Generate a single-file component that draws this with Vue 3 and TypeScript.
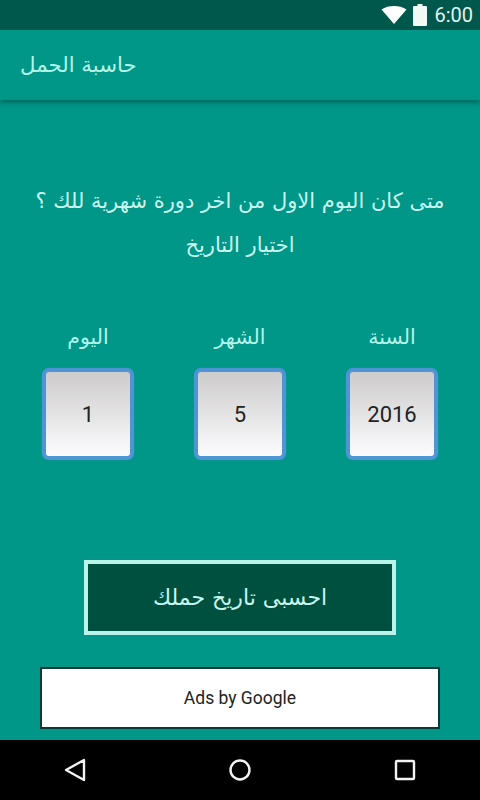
<script setup lang="ts">
interface Field { label: string; value: string }
const fields: Field[] = [
  { label: 'اليوم', value: '1' },
  { label: 'الشهر', value: '5' },
  { label: 'السنة', value: '2016' },
]
</script>

<template>
  <div class="screen">
    <header class="status">
      <svg class="wifi" width="26" height="18" viewBox="0 0 26 18"><path d="M0.5 3.500C4 1 8.500 0 13 0s9 1 12.500 3.500L13 18z" fill="#fff"/></svg>
      <svg class="battery" width="14" height="22" viewBox="0 0 14 22"><path d="M4.500 0h5v2H13a1 1 0 0 1 1 1v18a1 1 0 0 1-1 1H1a1 1 0 0 1-1-1V3a1 1 0 0 1 1-1h3.500z" fill="#f2f8f6"/></svg>
      <span class="time">6:00</span>
    </header>
    <div class="appbar"><span class="title">حاسبة الحمل</span></div>
    <main class="body">
      <div class="question">
        <p>متى كان اليوم الاول من اخر دورة شهرية للك ؟</p>
        <p>اختيار التاريخ</p>
      </div>
      <div class="fields">
        <div v-for="f in fields" :key="f.label" class="field">
          <span class="label">{{ f.label }}</span>
          <div class="box">{{ f.value }}</div>
        </div>
      </div>
      <button class="calc" type="button">احسبى تاريخ حملك</button>
      <div class="ad">Ads by Google</div>
    </main>
    <nav class="nav">
      <svg width="22" height="24" viewBox="0 0 22 24"><path d="M20 2v20L2 12z" fill="none" stroke="#f2f2f2" stroke-width="2.400" stroke-linejoin="round"/></svg>
      <svg width="24" height="24" viewBox="0 0 24 24"><circle cx="12" cy="12" r="9.500" fill="none" stroke="#f2f2f2" stroke-width="2.400"/></svg>
      <svg width="22" height="22" viewBox="0 0 22 22"><rect x="2" y="2" width="18" height="18" rx="1" fill="none" stroke="#f2f2f2" stroke-width="2.400"/></svg>
    </nav>
  </div>
</template>

<style scoped>
.screen {
  width: 480px;
  height: 800px;
  display: flex;
  flex-direction: column;
  background: #009688;
  font-family: "DejaVu Sans", "Noto Sans", sans-serif;
  overflow: hidden;
}
.status {
  height: 30px;
  flex: none;
  background: #00574b;
  display: flex;
  align-items: center;
  justify-content: flex-end;
  padding-right: 7px;
  box-sizing: border-box;
}
.wifi { margin-right: 6px; }
.battery { margin-right: 7px; }
.time {
  font-family: Roboto, sans-serif;
  font-size: 20px;
  color: #e2f3f0;
}
.appbar {
  height: 70px;
  flex: none;
  box-sizing: border-box;
  display: flex;
  align-items: center;
  padding: 0 0 2px 20px;
  background: #009688;
  box-shadow: 0 3px 4px rgba(0, 70, 60, 0.5);
  position: relative;
}
.title {
  font-size: 21.300px;
  color: #b2f5ea;
}
.body {
  flex: 1;
  display: flex;
  flex-direction: column;
  align-items: center;
  min-height: 0;
}
.question {
  margin-top: 79px;
  width: 100%;
  text-align: center;
  font-size: 21px;
  line-height: 44px;
  color: #c8f5ee;
}
.question p { margin: 0; }
.fields {
  margin-top: 55px;
  display: flex;
  gap: 60px;
  justify-content: center;
}
.field {
  width: 92px;
  display: flex;
  flex-direction: column;
  align-items: center;
  gap: 16px;
}
.label {
  font-size: 20.500px;
  line-height: 30px;
  color: #b2f5ea;
}
.box {
  width: 92px;
  height: 92px;
  box-sizing: border-box;
  border: 4px solid #4f95d6;
  border-radius: 7px;
  background: linear-gradient(#cdcbcb, #fcfcfe);
  box-shadow: 0 0 1px #4f95d6;
  display: flex;
  align-items: center;
  justify-content: center;
  font-family: Roboto, sans-serif;
  font-size: 22px;
  color: #222;
}
.calc {
  margin-top: 100px;
  width: 312px;
  height: 75px;
  box-sizing: border-box;
  border: 4px solid #b9f3ea;
  background: #00503f;
  color: #c8f5ee;
  font-family: "DejaVu Sans", sans-serif;
  font-size: 22px;
  padding: 0;
}
.ad {
  margin-top: 32px;
  width: 400px;
  height: 62px;
  box-sizing: border-box;
  border: 2px solid #063a35;
  background: #fff;
  display: flex;
  align-items: center;
  justify-content: center;
  font-family: Roboto, sans-serif;
  font-size: 17.500px;
  color: #222;
}
.nav {
  height: 60px;
  flex: none;
  background: #000;
  display: flex;
  align-items: center;
  padding: 0 64px;
  box-sizing: border-box;
  justify-content: space-between;
}
</style>
